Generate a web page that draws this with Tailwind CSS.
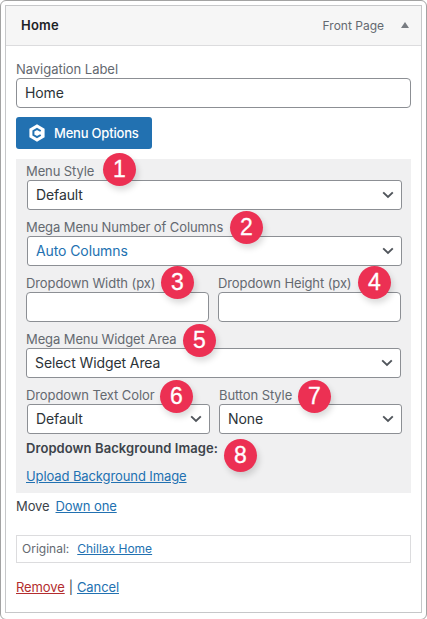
<!DOCTYPE html>
<html lang="en">
<head>
<meta charset="utf-8">
<title>Menu item settings</title>
<script src="https://cdn.jsdelivr.net/npm/@tailwindcss/browser@4"></script>
</head>
<body class="bg-white">
<svg class="hidden"><symbol id="chev" viewBox="0 0 12 8"><path d="M1.2 1.4 6 6l4.800-4.600" fill="none" stroke="#50555b" stroke-width="1.900"/></symbol></svg>
<div class="relative h-[619px] w-[427px] overflow-hidden bg-white font-['Inter',sans-serif] text-[13px] tracking-[-0.1px] text-[#3c434a]">
  <div class="h-[620px] w-[427px] rounded-[6px] border border-[#a3a3a3] px-1 pt-1">
    <div class="h-[608px] w-[417px] border border-[#c6c7c9]">
      <header class="flex h-[40px] items-center border-b border-[#dcdcde] bg-[#f6f6f6] pl-[15px] pr-[12px]">
        <h1 class="text-[13px] font-semibold tracking-[0.2px] text-[#1d2327]">Home</h1>
        <span class="ml-auto text-[12px] tracking-[0px] text-[#646970]">Front Page</span>
        <svg class="mb-[1px] ml-[17px] h-[6px] w-[8px]" viewBox="0 0 8 6"><path d="M0 6 4 0l4 6z" fill="#787c82"/></svg>
      </header>
      <main class="px-[10px]">
        <div class="flex h-[32px] items-end pb-[1px] leading-[16px] tracking-[-0.03px] text-[#646970]">Navigation Label</div>
        <div class="flex h-[30px] w-[395px] items-center rounded-[4px] border border-[#8c8f94] bg-white pb-[2px] pl-[8px] text-[14px] text-[#2c3338]">Home</div>
        <button class="mt-[9px] flex h-[32px] w-[136px] items-center rounded-[3px] bg-[#2271b1] pl-[12px] font-medium tracking-[-0.2px] text-white">
          <svg class="mr-[8px] h-[18px] w-[18px]" viewBox="0 0 18 18"><path d="M9 .3 16.600 4.700v8.600L9 17.700 1.400 13.300V4.700z" fill="#fff"/><path d="M12.700 7 9 4.900 5.400 7v4L9 13.100l3.700-2.100" fill="none" stroke="#2271b1" stroke-width="2"/></svg>
          <span class="whitespace-nowrap pt-[1px]">Menu Options</span>
        </button>
        <section class="mt-[10px] h-[334px] w-[395px] bg-[#f0f0f1] pl-[10px] text-[#646970]">
          <div class="flex h-[21px] items-end pb-[1px] leading-[16px]">Menu Style</div>
          <div class="ml-px flex h-[30px] w-[375px] items-center justify-between rounded-[3px] border border-[#8c8f94] bg-white pl-[8px] pr-[7px] text-[14px] text-[#2c3338]"><span class="pb-[1px]">Default</span><svg class="h-[8px] w-[12px]"><use href="#chev"/></svg></div>
          <div class="flex h-[26px] items-end pb-[1px] leading-[16px]">Mega Menu Number of Columns</div>
          <div class="ml-px flex h-[30px] w-[375px] items-center justify-between rounded-[3px] border border-[#8c8f94] bg-white pl-[8px] pr-[7px] text-[14px] text-[#2271b1]"><span class="pb-[1px]">Auto Columns</span><svg class="h-[8px] w-[12px]"><use href="#chev"/></svg></div>
          <div class="grid w-[375px] grid-cols-[183px_183px] gap-x-[9px]">
            <div class="flex h-[26px] items-end whitespace-nowrap pb-[1px] leading-[16px]">Dropdown Width (px)</div>
            <div class="flex h-[26px] items-end whitespace-nowrap pb-[1px] leading-[16px]">Dropdown Height (px)</div>
            <div class="h-[30px] rounded-[4px] border border-[#8c8f94] bg-white"></div>
            <div class="h-[30px] rounded-[4px] border border-[#8c8f94] bg-white"></div>
          </div>
          <div class="flex h-[26px] items-end pb-[1px] leading-[16px]">Mega Menu Widget Area</div>
          <div class="flex h-[30px] w-[375px] items-center justify-between rounded-[3px] border border-[#8c8f94] bg-white pl-[8px] pr-[7px] text-[14px] text-[#2c3338]"><span class="pb-[1px]">Select Widget Area</span><svg class="h-[8px] w-[12px]"><use href="#chev"/></svg></div>
          <div class="grid w-[376px] grid-cols-[184px_183px] gap-x-[9px]">
            <div class="flex h-[26px] items-end pb-[1px] leading-[16px]">Dropdown Text Color</div>
            <div class="flex h-[26px] items-end pb-[1px] leading-[16px]">Button Style</div>
            <div class="ml-px flex h-[30px] items-center justify-between rounded-[3px] border border-[#8c8f94] bg-white pl-[8px] pr-[7px] text-[14px] text-[#2c3338]"><span class="pb-[1px]">Default</span><svg class="h-[8px] w-[12px]"><use href="#chev"/></svg></div>
            <div class="flex h-[30px] items-center justify-between rounded-[3px] border border-[#8c8f94] bg-white pl-[8px] pr-[7px] text-[14px] text-[#2c3338]"><span class="pb-[1px]">None</span><svg class="h-[8px] w-[12px]"><use href="#chev"/></svg></div>
          </div>
          <div class="mt-[5px] leading-[18px] font-semibold tracking-[0.08px] text-[#3c434a]">Dropdown Background Image:</div>
          <a class="mt-[10px] block leading-[18px] text-[#2271b1] underline">Upload Background Image</a>
        </section>
        <div class="mt-[4px] flex gap-[6px] leading-[18px]"><span>Move</span><a class="text-[#2271b1] underline">Down one</a></div>
        <div class="mt-[20px] flex h-[28px] w-[395px] items-center gap-[8px] border border-[#dcdcde] pb-[1px] pl-[5px] text-[12px] tracking-[0px] text-[#646970]"><span>Original:</span><a class="text-[#2271b1] underline">Chillax Home</a></div>
        <div class="mt-[15px] flex gap-[4px] leading-[18px]"><a class="text-[#b32d2e] underline">Remove</a><span>|</span><a class="text-[#2271b1] underline">Cancel</a></div>
      </main>
    </div>
  </div>
  <div class="font-['Liberation_Sans',sans-serif] text-[23px] leading-none tracking-normal text-white [-webkit-text-stroke:0.3px_white]">
    <div class="absolute left-[103px] top-[153px] flex size-[33px] items-center justify-center rounded-full bg-[#ec3053] shadow-[2px_4px_6px_rgba(0,0,0,0.15)]">1</div>
    <div class="absolute left-[230px] top-[211px] flex size-[33px] items-center justify-center rounded-full bg-[#ec3053] shadow-[2px_4px_6px_rgba(0,0,0,0.15)]">2</div>
    <div class="absolute left-[161px] top-[266px] flex size-[33px] items-center justify-center rounded-full bg-[#ec3053] shadow-[2px_4px_6px_rgba(0,0,0,0.15)]">3</div>
    <div class="absolute left-[358px] top-[266px] flex size-[33px] items-center justify-center rounded-full bg-[#ec3053] shadow-[2px_4px_6px_rgba(0,0,0,0.15)]">4</div>
    <div class="absolute left-[183px] top-[324px] flex size-[33px] items-center justify-center rounded-full bg-[#ec3053] shadow-[2px_4px_6px_rgba(0,0,0,0.15)]">5</div>
    <div class="absolute left-[160px] top-[380px] flex size-[33px] items-center justify-center rounded-full bg-[#ec3053] shadow-[2px_4px_6px_rgba(0,0,0,0.15)]">6</div>
    <div class="absolute left-[298px] top-[380px] flex size-[33px] items-center justify-center rounded-full bg-[#ec3053] shadow-[2px_4px_6px_rgba(0,0,0,0.15)]">7</div>
    <div class="absolute left-[224px] top-[439px] flex size-[33px] items-center justify-center rounded-full bg-[#ec3053] shadow-[2px_4px_6px_rgba(0,0,0,0.15)]">8</div>
  </div>
</div>
</body>
</html>
